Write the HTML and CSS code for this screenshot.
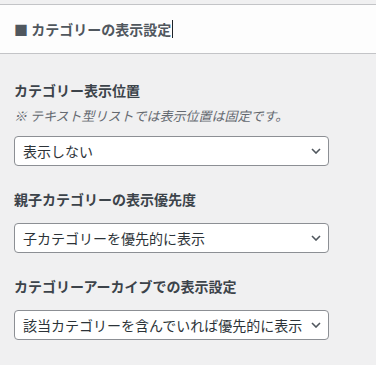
FILE: index.html
```html
<!DOCTYPE html>
<html lang="ja">
<head>
<meta charset="utf-8">
<link rel="stylesheet" href="styles.css">
</head>
<body>
<div class="top-strip"></div>
<header class="section-head">
  <h3 class="section-title">■ カテゴリーの表示設定<span class="caret"></span></h3>
</header>
<main class="controls">
  <div class="control">
    <span class="control-title with-desc">カテゴリー表示位置</span>
    <span class="control-desc">※ テキスト型リストでは表示位置は固定です。</span>
    <div class="select-wrap">
      <select class="select"><option>表示しない</option></select>
      <svg class="chev" viewBox="0 0 10 6" width="10" height="6"><polyline points="1,1 5,5 9,1" fill="none" stroke="#50575e" stroke-width="1.6"/></svg>
    </div>
  </div>
  <div class="control">
    <span class="control-title">親子カテゴリーの表示優先度</span>
    <div class="select-wrap">
      <select class="select"><option>子カテゴリーを優先的に表示</option></select>
      <svg class="chev" viewBox="0 0 10 6" width="10" height="6"><polyline points="1,1 5,5 9,1" fill="none" stroke="#50575e" stroke-width="1.6"/></svg>
    </div>
  </div>
  <div class="control">
    <span class="control-title">カテゴリーアーカイブでの表示設定</span>
    <div class="select-wrap">
      <select class="select"><option>該当カテゴリーを含んでいれば優先的に表示</option></select>
      <svg class="chev" viewBox="0 0 10 6" width="10" height="6"><polyline points="1,1 5,5 9,1" fill="none" stroke="#50575e" stroke-width="1.6"/></svg>
    </div>
  </div>
</main>
</body>
</html>
```

FILE: styles.css
```css
html, body {
  margin: 0;
  padding: 0;
}
body {
  background: #f0f0f1;
  font-family: "Noto Sans CJK JP", "Noto Sans", sans-serif;
  color: #2c3338;
  width: 376px;
  height: 365px;
  overflow: hidden;
}
.top-strip {
  height: 4px;
  background: #f0f0f1;
}
.section-head {
  background: #fdfdfd;
  border-top: 1px solid #c3c4c7;
  border-bottom: 1px solid #c3c4c7;
  height: 48px;
  display: flex;
  align-items: center;
  padding: 0 14px;
}
.section-title {
  margin: 0;
  font-size: 14px;
  font-weight: 700;
  color: #50575e;
  line-height: 20px;
  display: flex;
  align-items: center;
}
.caret {
  display: inline-block;
  width: 1px;
  height: 18px;
  background: #1d2327;
  margin-left: 1px;
}
.controls {
  padding: 24px 14px 0;
}
.control {
  display: flex;
  flex-direction: column;
  margin-bottom: 21px;
}
.control-title {
  font-size: 14px;
  font-weight: 700;
  line-height: 24px;
  color: #3c434a;
  margin-bottom: 12px;
}
.control-title.with-desc {
  margin-bottom: 4px;
}
.control-desc {
  font-size: 13px;
  font-style: italic;
  line-height: 20px;
  color: #646970;
  margin-bottom: 10px;
}
.select-wrap {
  position: relative;
  width: 315px;
}
.select {
  -webkit-appearance: none;
  appearance: none;
  display: block;
  width: 315px;
  height: 30px;
  box-sizing: border-box;
  border: 1px solid #8c8f94;
  border-radius: 4px;
  background: #fff;
  padding: 0 24px 0 8px;
  font-family: "Noto Sans CJK JP", "Noto Sans", sans-serif;
  font-size: 14px;
  color: #2c3338;
  line-height: 28px;
  margin: 0;
}
.chev {
  position: absolute;
  right: 8px;
  top: 12px;
  pointer-events: none;
}
```
